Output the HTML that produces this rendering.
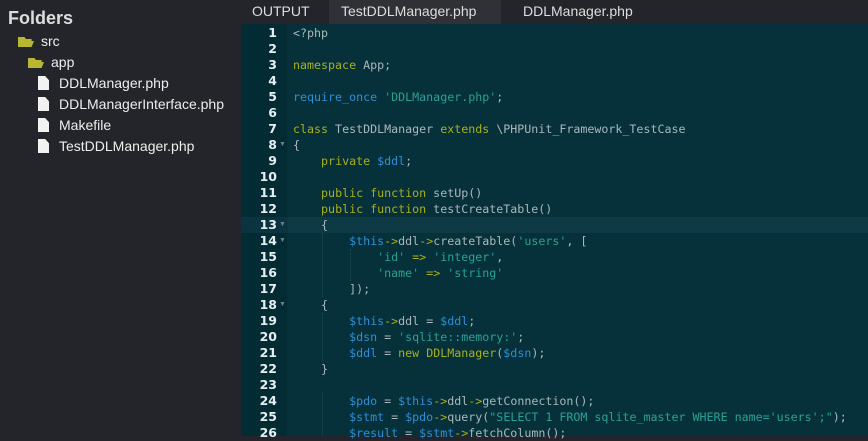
<!DOCTYPE html>
<html><head><meta charset="utf-8"><style>
*{margin:0;padding:0;box-sizing:border-box}
body{width:868px;height:436px;overflow:hidden;background:#23252a;font-family:"Liberation Sans",sans-serif;position:relative}
.side{position:absolute;left:0;top:0;width:241px;height:436px;background:#23252a;color:#e8e8e8}
.side .t{position:absolute;left:8px;top:8px;font-size:18px;font-weight:bold;color:#ddd}
.it{position:absolute;font-size:14px;color:#eee;height:20px;line-height:20px}
.fold{position:absolute;width:16px;height:10px;background:#b8b632;clip-path:polygon(0 0,40% 0,50% 20%,85% 20%,85% 40%,100% 40%,85% 100%,0 100%)}
.file{position:absolute;width:11px;height:14px;background:#f2f2f2;clip-path:polygon(0 0,65% 0,100% 30%,100% 100%,0 100%)}
.tabs{position:absolute;left:241px;top:0;width:627px;height:24px;background:#23252a;font-size:14px;color:#ddd}
.tab{position:absolute;top:0;height:24px;line-height:22px}
.ed{position:absolute;left:241px;top:24px;width:627px;height:412px;background:#06303a}
.gut{position:absolute;left:241px;top:24px;width:46px;height:412px;background:#032b34}
.ln{position:absolute;left:241px;width:36px;text-align:right;font-family:"DejaVu Sans",sans-serif;font-weight:bold;font-size:12.5px;color:#e8eef0;height:16px;line-height:16px}
.cl{position:absolute;left:293px;font-family:"DejaVu Sans Mono",monospace;font-size:11.65px;color:#a9b8bb;white-space:pre;height:16px;line-height:16px}
.k{color:#a7b01f}.s{color:#2aa198}.v{color:#2f8fd6}.o{color:#a7b01f}
.ar{position:absolute;left:279px;font-size:7px;color:#6a8088}
.hl{position:absolute;left:288px;top:217px;width:580px;height:16px;background:#0e3a45}
.guide{position:absolute;width:0;border-left:1px dotted #1d4a55}
</style></head><body>
<div class="side">
<div class="t">Folders</div>
<div class="fold" style="left:18px;top:37px"></div><div class="it" style="left:41px;top:31px">src</div>
<div class="fold" style="left:28px;top:58px"></div><div class="it" style="left:51px;top:52px">app</div>
<div class="file" style="left:38px;top:76px"></div><div class="it" style="left:59px;top:73px">DDLManager.php</div>
<div class="file" style="left:38px;top:97px"></div><div class="it" style="left:59px;top:94px">DDLManagerInterface.php</div>
<div class="file" style="left:38px;top:118px"></div><div class="it" style="left:59px;top:115px">Makefile</div>
<div class="file" style="left:38px;top:139px"></div><div class="it" style="left:59px;top:136px">TestDDLManager.php</div>
</div>
<div class="tabs">
<div class="tab" style="left:11px">OUTPUT</div>
<div class="tab" style="left:88px;width:172px;background:#2f3136;padding-left:12px">TestDDLManager.php</div>
<div class="tab" style="left:282px">DDLManager.php</div>
</div>
<div class="ed"></div><div class="gut"></div>
<div class="hl"></div><div style="position:absolute;left:241px;top:217px;width:47px;height:16px;background:#0a3440"></div>
<div class="guide" style="left:322px;top:233px;height:64px"></div>
<div class="guide" style="left:350px;top:249px;height:32px"></div>
<div class="guide" style="left:322px;top:313px;height:48px"></div>
<div class="guide" style="left:322px;top:393px;height:43px"></div>

<div class="ln" style="top:25px">1</div><div class="ln" style="top:41px">2</div><div class="ln" style="top:57px">3</div><div class="ln" style="top:73px">4</div><div class="ln" style="top:89px">5</div><div class="ln" style="top:105px">6</div><div class="ln" style="top:121px">7</div><div class="ln" style="top:137px">8</div><div class="ln" style="top:153px">9</div><div class="ln" style="top:169px">10</div><div class="ln" style="top:185px">11</div><div class="ln" style="top:201px">12</div><div class="ln" style="top:217px">13</div><div class="ln" style="top:233px">14</div><div class="ln" style="top:249px">15</div><div class="ln" style="top:265px">16</div><div class="ln" style="top:281px">17</div><div class="ln" style="top:297px">18</div><div class="ln" style="top:313px">19</div><div class="ln" style="top:329px">20</div><div class="ln" style="top:345px">21</div><div class="ln" style="top:361px">22</div><div class="ln" style="top:377px">23</div><div class="ln" style="top:393px">24</div><div class="ln" style="top:409px">25</div><div class="ln" style="top:425px">26</div>
<div class="ar" style="top:141px">▼</div><div class="ar" style="top:221px">▼</div><div class="ar" style="top:237px">▼</div><div class="ar" style="top:301px">▼</div>

<div class="cl" style="top:25px">&lt;?php</div>
<div class="cl" style="top:57px"><span class="k">namespace</span> App;</div>
<div class="cl" style="top:89px"><span class="v">require_once</span> <span class="s">'DDLManager.php'</span>;</div>
<div class="cl" style="top:121px"><span class="k">class</span> TestDDLManager <span class="k">extends</span> \PHPUnit_Framework_TestCase</div>
<div class="cl" style="top:137px">{</div>
<div class="cl" style="top:153px">    <span class="k">private</span> <span class="v">$ddl</span>;</div>
<div class="cl" style="top:185px">    <span class="k">public function</span> setUp()</div>
<div class="cl" style="top:201px">    <span class="k">public function</span> testCreateTable()</div>
<div class="cl" style="top:217px">    {</div>
<div class="cl" style="top:233px">        <span class="v">$this</span><span class="o">-&gt;</span>ddl<span class="o">-&gt;</span>createTable(<span class="s">'users'</span>, [</div>
<div class="cl" style="top:249px">            <span class="s">'id'</span> <span class="o">=&gt;</span> <span class="s">'integer'</span>,</div>
<div class="cl" style="top:265px">            <span class="s">'name'</span> <span class="o">=&gt;</span> <span class="s">'string'</span></div>
<div class="cl" style="top:281px">        ]);</div>
<div class="cl" style="top:297px">    {</div>
<div class="cl" style="top:313px">        <span class="v">$this</span><span class="o">-&gt;</span>ddl = <span class="v">$ddl</span>;</div>
<div class="cl" style="top:329px">        <span class="v">$dsn</span> = <span class="s">'sqlite::memory:'</span>;</div>
<div class="cl" style="top:345px">        <span class="v">$ddl</span> = <span class="k">new DDLManager</span>(<span class="v">$dsn</span>);</div>
<div class="cl" style="top:361px">    }</div>
<div class="cl" style="top:393px">        <span class="v">$pdo</span> = <span class="v">$this</span><span class="o">-&gt;</span>ddl<span class="o">-&gt;</span>getConnection();</div>
<div class="cl" style="top:409px">        <span class="v">$stmt</span> = <span class="v">$pdo</span><span class="o">-&gt;</span>query(<span class="s">"SELECT 1 FROM sqlite_master WHERE name='users';"</span>);</div>
<div class="cl" style="top:425px">        <span class="v">$result</span> = <span class="v">$stmt</span><span class="o">-&gt;</span>fetchColumn();</div>
</body></html>
